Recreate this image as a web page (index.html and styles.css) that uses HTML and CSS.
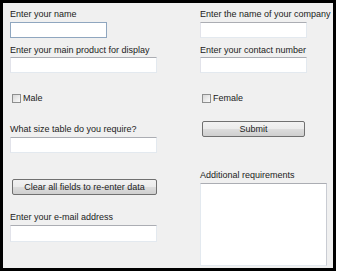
FILE: index.html
```html
<!doctype html>
<html>
  <head>
    <title>Order form</title>
    <link rel="stylesheet" href="styles.css">
  </head>
  <body>
    <div class="window">
      <div class="column left">
        <label class="label first">Enter your name</label>
        <input class="field short focused" type="text">

        <label class="label">Enter your main product for display</label>
        <input class="field wide tight" type="text">

        <div class="check-row">
          <span class="checkbox"></span>
          <span class="check-text">Male</span>
        </div>

        <label class="label size-label">What size table do you require?</label>
        <input class="field wide" type="text">

        <button class="button clear">Clear all fields to re-enter data</button>

        <label class="label mail-label">Enter your e-mail address</label>
        <input class="field wide mail" type="text">
      </div>

      <div class="column right">
        <label class="label first">Enter the name of your company</label>
        <input class="field short" type="text">

        <label class="label">Enter your contact number</label>
        <input class="field short tight" type="text">

        <div class="check-row">
          <span class="checkbox"></span>
          <span class="check-text">Female</span>
        </div>

        <button class="button submit">Submit</button>

        <label class="label extra-label">Additional requirements</label>
        <textarea class="notes"></textarea>
      </div>
    </div>
  </body>
</html>
```

FILE: styles.css
```css
* {
  box-sizing: border-box;
  margin: 0;
  padding: 0;
}

body {
  background: #fff;
  font-family: 'Liberation Sans', Arial, sans-serif;
  font-size: 9px;
  color: #222;
}

.window {
  width: 336px;
  height: 271px;
  border: 3px solid #000;
  background: #f0f0f0;
  display: grid;
  grid-template-columns: 190px 1fr;
  padding: 5px 0 0 7px;
}

.column {
  display: flex;
  flex-direction: column;
  align-items: flex-start;
}

.label {
  display: block;
  height: 12px;
  line-height: 12px;
  margin-top: 6px;
  white-space: nowrap;
}
.label.first {
  margin-top: 0;
}

.field {
  height: 16px;
  margin-top: 2px;
  background: #fff;
  border: 1px solid #e3e9ef;
  border-top-color: #abadb3;
  border-left-color: #e2e3ea;
  outline: none;
}
.field.tight {
  margin-top: 1px;
}
.field.short {
  width: 107px;
}
.left .field.short {
  width: 97px;
}
.field.wide {
  width: 147px;
}
.field.focused {
  border-color: #8fa6bf;
}
.field.mail {
  height: 17px;
}

.check-row {
  display: flex;
  align-items: center;
  height: 12px;
  margin-top: 19px;
  padding-left: 2px;
}

.checkbox {
  width: 9px;
  height: 9px;
  border: 1px solid #8e8f8f;
  background: linear-gradient(135deg, #d8d8d8, #fbfbfb);
  margin-right: 2px;
}

.size-label {
  margin-top: 19px;
}

.button {
  height: 16px;
  font-family: inherit;
  font-size: inherit;
  color: #222;
  border: 1px solid #707070;
  border-radius: 2px;
  background: linear-gradient(#f2f2f2 0%, #ebebeb 50%, #dddddd 50%, #cfcfcf 100%);
}
.button.clear {
  width: 145px;
  margin: 26px 0 0 2px;
}
.button.submit {
  width: 103px;
  margin: 17px 0 0 2px;
}

.mail-label {
  margin-top: 16px;
}

.extra-label {
  margin-top: 32px;
}

.notes {
  width: 127px;
  height: 83px;
  margin-top: 2px;
  resize: none;
  background: #fff;
  border: 1px solid #e3e9ef;
  border-top-color: #abadb3;
  border-right-color: #c9ccd3;
  outline: none;
}
```
